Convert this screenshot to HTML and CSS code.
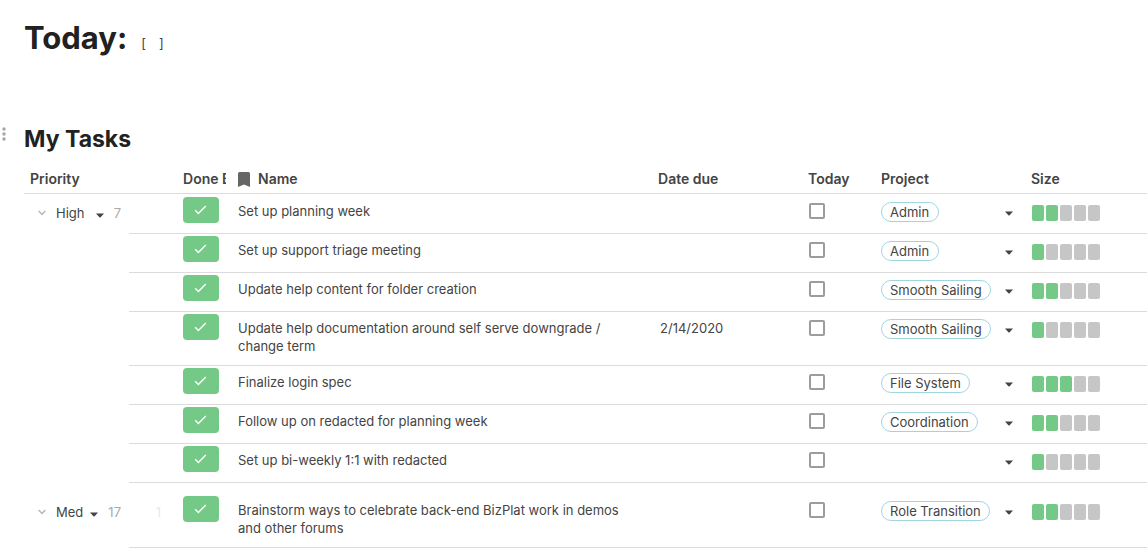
FILE: index.html
```html
<!DOCTYPE html>
<html lang="en">
<head>
    <meta charset="UTF-8">
    <meta name="viewport" content="width=device-width, initial-scale=1.0">
    <title>My Tasks</title>
    <link rel="stylesheet" href="styles.css">
</head>
<body>
    <svg width="0" height="0" class="sprite" aria-hidden="true">
        <symbol id="check" viewBox="0 0 14 12"><path d="M1.2 6.2l3.2 3.3L11.8 2" fill="none" stroke="#fff" stroke-width="1.4"/></symbol>
        <symbol id="caret" viewBox="0 0 8 5"><path d="M0 .5h8L4.6 4.2q-.6.5-1.2 0z" fill="#444"/></symbol>
        <symbol id="chevron" viewBox="0 0 8 6"><path d="M.7 1L4 4.5 7.3 1" fill="none" stroke="#b5b5b5" stroke-width="1.4"/></symbol>
    </svg>

    <main class="page">
        <header class="today">
            <h1>Today:</h1>
            <p class="brackets"><span>[</span><span>]</span></p>
        </header>

        <div class="section-title">
            <button class="kebab" aria-label="Table options">
                <svg width="4" height="14" viewBox="0 0 4 14" fill="#a5a5a5"><circle cx="2" cy="2" r="1.7"/><circle cx="2" cy="7" r="1.7"/><circle cx="2" cy="12" r="1.7"/></svg>
            </button>
            <h2>My Tasks</h2>
        </div>

        <table class="tasks">
            <colgroup>
                <col class="col-priority"><col class="col-spacer"><col class="col-done"><col class="col-name">
                <col class="col-date"><col class="col-today"><col class="col-project"><col class="col-size">
            </colgroup>
            <thead>
                <tr>
                    <th colspan="2">Priority</th>
                    <th><div class="clip">Done B</div></th>
                    <th>
                        <div class="name-head">
                            <svg width="12" height="15" viewBox="0 0 12 15"><path d="M1.5 0h9Q12 0 12 1.5V15l-6-2.4L0 15V1.5Q0 0 1.5 0z" fill="#666"/></svg>
                            Name
                        </div>
                    </th>
                    <th>Date due</th>
                    <th>Today</th>
                    <th>Project</th>
                    <th>Size</th>
                </tr>
            </thead>

            <tbody class="high">
                <tr>
                    <th rowspan="7" class="group">
                        <div class="group-head">
                            <button class="toggle" aria-label="Collapse High"><svg width="8" height="6"><use href="#chevron"/></svg></button>
                            <select aria-label="Priority"><option>High</option></select>
                            <svg class="caret" width="8" height="5"><use href="#caret"/></svg>
                            <span class="count">7</span>
                        </div>
                    </th>
                    <td></td>
                    <td><button class="done" aria-label="Done"><svg width="14" height="12"><use href="#check"/></svg></button></td>
                    <td class="name">Set up planning week</td>
                    <td></td>
                    <td><input type="checkbox" aria-label="Today"></td>
                    <td><div class="project"><select class="pill" aria-label="Project"><option>Admin</option></select><svg class="caret" width="8" height="5"><use href="#caret"/></svg></div></td>
                    <td><div class="size" role="img" aria-label="2 of 5"><i class="on"></i><i class="on"></i><i></i><i></i><i></i></div></td>
                </tr>
                <tr>
                    <td></td>
                    <td><button class="done" aria-label="Done"><svg width="14" height="12"><use href="#check"/></svg></button></td>
                    <td class="name">Set up support triage meeting</td>
                    <td></td>
                    <td><input type="checkbox" aria-label="Today"></td>
                    <td><div class="project"><select class="pill" aria-label="Project"><option>Admin</option></select><svg class="caret" width="8" height="5"><use href="#caret"/></svg></div></td>
                    <td><div class="size" role="img" aria-label="1 of 5"><i class="on"></i><i></i><i></i><i></i><i></i></div></td>
                </tr>
                <tr>
                    <td></td>
                    <td><button class="done" aria-label="Done"><svg width="14" height="12"><use href="#check"/></svg></button></td>
                    <td class="name">Update help content for folder creation</td>
                    <td></td>
                    <td><input type="checkbox" aria-label="Today"></td>
                    <td><div class="project"><select class="pill" aria-label="Project"><option>Smooth Sailing</option></select><svg class="caret" width="8" height="5"><use href="#caret"/></svg></div></td>
                    <td><div class="size" role="img" aria-label="2 of 5"><i class="on"></i><i class="on"></i><i></i><i></i><i></i></div></td>
                </tr>
                <tr>
                    <td></td>
                    <td><button class="done" aria-label="Done"><svg width="14" height="12"><use href="#check"/></svg></button></td>
                    <td class="name">Update help documentation around self serve downgrade / change term</td>
                    <td class="date">2/14/2020</td>
                    <td><input type="checkbox" aria-label="Today"></td>
                    <td><div class="project"><select class="pill" aria-label="Project"><option>Smooth Sailing</option></select><svg class="caret" width="8" height="5"><use href="#caret"/></svg></div></td>
                    <td><div class="size" role="img" aria-label="1 of 5"><i class="on"></i><i></i><i></i><i></i><i></i></div></td>
                </tr>
                <tr>
                    <td></td>
                    <td><button class="done" aria-label="Done"><svg width="14" height="12"><use href="#check"/></svg></button></td>
                    <td class="name">Finalize login spec</td>
                    <td></td>
                    <td><input type="checkbox" aria-label="Today"></td>
                    <td><div class="project"><select class="pill" aria-label="Project"><option>File System</option></select><svg class="caret" width="8" height="5"><use href="#caret"/></svg></div></td>
                    <td><div class="size" role="img" aria-label="3 of 5"><i class="on"></i><i class="on"></i><i class="on"></i><i></i><i></i></div></td>
                </tr>
                <tr>
                    <td></td>
                    <td><button class="done" aria-label="Done"><svg width="14" height="12"><use href="#check"/></svg></button></td>
                    <td class="name">Follow up on redacted for planning week</td>
                    <td></td>
                    <td><input type="checkbox" aria-label="Today"></td>
                    <td><div class="project"><select class="pill" aria-label="Project"><option>Coordination</option></select><svg class="caret" width="8" height="5"><use href="#caret"/></svg></div></td>
                    <td><div class="size" role="img" aria-label="2 of 5"><i class="on"></i><i class="on"></i><i></i><i></i><i></i></div></td>
                </tr>
                <tr>
                    <td></td>
                    <td><button class="done" aria-label="Done"><svg width="14" height="12"><use href="#check"/></svg></button></td>
                    <td class="name">Set up bi-weekly 1:1 with redacted</td>
                    <td></td>
                    <td><input type="checkbox" aria-label="Today"></td>
                    <td><div class="project"><select class="pill empty" aria-label="Project"><option></option></select><svg class="caret" width="8" height="5"><use href="#caret"/></svg></div></td>
                    <td><div class="size" role="img" aria-label="1 of 5"><i class="on"></i><i></i><i></i><i></i><i></i></div></td>
                </tr>
            </tbody>

            <tbody class="med">
                <tr>
                    <th class="group">
                        <div class="group-head">
                            <button class="toggle" aria-label="Collapse Med"><svg width="8" height="6"><use href="#chevron"/></svg></button>
                            <select aria-label="Priority"><option>Med</option></select>
                            <svg class="caret" width="8" height="5"><use href="#caret"/></svg>
                            <span class="count">17</span>
                        </div>
                    </th>
                    <td class="row-number">1</td>
                    <td><button class="done" aria-label="Done"><svg width="14" height="12"><use href="#check"/></svg></button></td>
                    <td class="name">Brainstorm ways to celebrate back-end BizPlat work in demos and other forums</td>
                    <td></td>
                    <td><input type="checkbox" aria-label="Today"></td>
                    <td><div class="project"><select class="pill" aria-label="Project"><option>Role Transition</option></select><svg class="caret" width="8" height="5"><use href="#caret"/></svg></div></td>
                    <td><div class="size" role="img" aria-label="2 of 5"><i class="on"></i><i class="on"></i><i></i><i></i><i></i></div></td>
                </tr>
            </tbody>
        </table>
    </main>
</body>
</html>
```
FILE: styles.css
```css
* {
    box-sizing: border-box;
}
body {
    margin: 0;
    background: #fff;
    color: #444;
    font-family: Inter, sans-serif;
    font-size: 14px;
    line-height: 18px;
}
h1, h2, p {
    margin: 0;
}
h1, h2 {
    color: #212121;
    font-weight: 700;
}
h1 {
    font-size: 31px;
    line-height: 40px;
}
h2 {
    font-size: 23px;
    line-height: 32px;
}
button, select {
    font: inherit;
    color: inherit;
    background: none;
    border: 0;
    padding: 0;
    cursor: pointer;
}
svg {
    display: block;
    flex: none;
}
.sprite {
    position: absolute;
}
.page {
    padding: 18px 0 0 24px;
}
.today {
    display: flex;
    align-items: flex-end;
    gap: 14px;
}
.brackets {
    display: flex;
    gap: 13px;
    padding-bottom: 6px;
    font-size: 13px;
}
.section-title {
    position: relative;
    margin-top: 65px;
}
.kebab {
    position: absolute;
    left: -22px;
    top: 4px;
}

/* table */
.tasks {
    width: 100%;
    table-layout: fixed;
    border-collapse: separate;
    border-spacing: 0;
    margin-top: 10px;
}
.col-priority { width: 105px; }
.col-spacer { width: 48px; }
.col-done { width: 55px; }
.col-name { width: 420px; }
.col-date { width: 150px; }
.col-today { width: 73px; }
.col-project { width: 150px; }
th {
    text-align: left;
    font-weight: 600;
}
thead th {
    padding: 5px 6px 5px;
    border-bottom: 1px solid #dcdcdc;
}
.clip {
    overflow: hidden;
    white-space: nowrap;
}
.name-head {
    display: flex;
    align-items: center;
    gap: 8px;
}
td, .group {
    vertical-align: top;
    padding: 2px 6px 10px;
    font-size: 13px;
}
td {
    border-bottom: 1px solid #dcdcdc;
}
.high tr:first-child > * {
    padding-top: 3px;
}
.med tr:first-child > * {
    padding-top: 13px;
}
.group {
    padding-left: 14px;
    padding-right: 8px;
    font-weight: 400;
}
.group-head {
    display: flex;
    align-items: center;
    padding-top: 7px;
}
.group-head select {
    appearance: none;
    margin: 0 auto 0 10px;
}
.group-head .caret {
    margin: 4px 10px 0 0;
}
.count {
    color: #aaa;
}
.row-number {
    padding-right: 16px;
    color: #e8e8e8;
    line-height: 32px;
    text-align: right;
}
.done {
    display: flex;
    align-items: center;
    justify-content: center;
    width: 36px;
    height: 26px;
    border-radius: 4px;
    background: #75c986;
}
.name {
    padding-right: 20px;
}
.name::before, .date::before {
    content: "";
    display: block;
    height: 5px;
}
.date {
    padding-left: 8px;
}
input[type="checkbox"] {
    appearance: none;
    display: block;
    width: 16px;
    height: 16px;
    margin: 6px 0 0 1px;
    border: 2px solid #9c9c9c;
    border-radius: 2px;
}
.project {
    display: flex;
    align-items: center;
    justify-content: space-between;
    padding: 5px 6px 0 0;
}
.project .caret {
    margin-top: 2px;
}
.pill {
    appearance: none;
    height: 20px;
    padding: 0 8px;
    border: 1px solid #9ed6e0;
    border-radius: 10px;
    line-height: 18px;
}
.pill.empty {
    border-color: transparent;
}
.size {
    display: flex;
    gap: 2px;
    padding: 8px 0 0 1px;
}
.size i {
    width: 12px;
    height: 16px;
    border-radius: 2px;
    background: #c6c6c6;
}
.size .on {
    background: #75c986;
}
```
